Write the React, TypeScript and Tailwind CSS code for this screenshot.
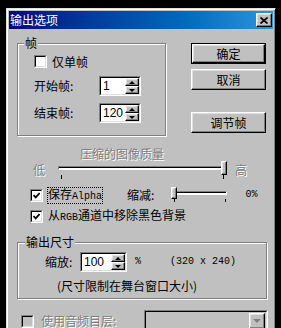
import React from "react";

const raised =
  "border border-t-white border-l-white border-r-black border-b-black shadow-[inset_-1px_-1px_0_#808080,inset_1px_1px_0_#dfdfdf]";
const sunkenOuter =
  "border border-t-[#808080] border-l-[#808080] border-r-white border-b-white";
const sunkenInner =
  "border border-t-black border-l-black border-r-[#dfdfdf] border-b-[#dfdfdf]";
const disabledText = "text-[#808080] [text-shadow:1px_1px_0_#fff]";
const latin = "font-['Liberation_Mono',monospace] text-[10px]";
const etched =
  "border border-[#808080] shadow-[inset_1px_1px_0_#fff,1px_1px_0_#fff]";

const Check = ({ checked, disabled }: { checked?: boolean; disabled?: boolean }) => (
  <div className={`w-[13px] h-[13px] shrink-0 ${sunkenOuter}`}>
    <div
      className={`w-full h-full flex items-center justify-center ${sunkenInner} ${
        disabled ? "bg-[#c0c0c0]" : "bg-white"
      }`}
    >
      {checked && (
        <svg width="7" height="7" viewBox="0 0 7 7">
          <path d="M0.5 3 L2.7 5.4 L6.6 1" stroke="black" strokeWidth="1.8" fill="none" />
        </svg>
      )}
    </div>
  </div>
);

const Arrow = ({ up }: { up?: boolean }) =>
  up ? (
    <div className="w-0 h-0 border-x-[3px] border-x-transparent border-b-[3px] border-b-black" />
  ) : (
    <div className="w-0 h-0 border-x-[3px] border-x-transparent border-t-[3px] border-t-black" />
  );

const Spin = ({ value, width }: { value: string; width: string }) => (
  <div className={`${width} h-[20px] shrink-0 ${sunkenOuter}`}>
    <div className={`h-full flex bg-white ${sunkenInner}`}>
      <div className="flex-1 flex items-center pl-[2px] font-['Liberation_Sans',sans-serif] text-[12px] leading-[12px]">
        {value}
      </div>
      <div className="w-[14px] flex flex-col">
        <div className={`flex-1 flex items-center justify-center bg-[#c0c0c0] ${raised}`}>
          <Arrow up />
        </div>
        <div className={`flex-1 flex items-center justify-center bg-[#c0c0c0] ${raised}`}>
          <Arrow />
        </div>
      </div>
    </div>
  </div>
);

const Button = ({ label, isDefault }: { label: string; isDefault?: boolean }) =>
  isDefault ? (
    <div className="w-[75px] h-[21px] border border-black">
      <div className={`h-full flex items-center justify-center bg-[#c0c0c0] ${raised}`}>{label}</div>
    </div>
  ) : (
    <div className={`w-[75px] h-[21px] flex items-center justify-center bg-[#c0c0c0] ${raised}`}>
      {label}
    </div>
  );

export default function App() {
  return (
    <div className="w-[281px] h-[328px] bg-black overflow-hidden font-['Noto_Sans_CJK_SC',sans-serif] text-[12px] leading-[12px] text-black">
      <div className="ml-[6px] mt-[8px] w-[270px] h-[324px] bg-[#c0c0c0] border border-t-[#dfdfdf] border-l-[#dfdfdf] border-r-black border-b-black p-[2px] shadow-[inset_1px_1px_0_#fff,inset_-1px_0_0_#808080]">
        {/* title bar */}
        <div className="h-[18px] flex items-center justify-between pl-[1px] pr-[1px] bg-linear-to-r from-[#000080] to-[#2a96dc]">
          <span className="text-white text-[12px]">输出选项</span>
          <div className={`w-[16px] h-[14px] flex items-center justify-center bg-[#c0c0c0] ${raised}`}>
            <svg width="8" height="7" viewBox="0 0 8 7">
              <path d="M0.5 0.5 L7.5 6.5 M7.5 0.5 L0.5 6.5" stroke="black" strokeWidth="1.7" />
            </svg>
          </div>
        </div>

        {/* top row */}
        <div className="flex mt-[14px] ml-[8px]">
          <div className={`relative w-[149px] h-[93px] ${etched}`}>
            <span className="absolute -top-[7px] left-[6px] px-[1px] bg-[#c0c0c0]">帧</span>
            <div className="pt-[11px] pl-[16px] flex flex-col">
              <div className="flex items-center h-[13px] gap-[5px]">
                <Check />
                <span>仅单帧</span>
              </div>
              <div className="flex items-center mt-[8px]">
                <span className="w-[65px]">开始帧:</span>
                <Spin value="1" width="w-[42px]" />
              </div>
              <div className="flex items-center mt-[7px]">
                <span className="w-[65px]">结束帧:</span>
                <Spin value="120" width="w-[42px]" />
              </div>
            </div>
          </div>
          <div className="ml-[25px] flex flex-col">
            <Button label="确定" isDefault />
            <div className="mt-[5px]">
              <Button label="取消" />
            </div>
            <div className="mt-[22px]">
              <Button label="调节帧" />
            </div>
          </div>
        </div>

        {/* compression */}
        <div className={`mt-[12px] ml-[71px] ${disabledText}`}>压缩的图像质量</div>
        <div className="flex items-start h-[20px] mt-[1px]">
          <span className={`ml-[24px] mt-[3px] ${disabledText}`}>低</span>
          <div className="relative ml-[11px] w-[172px] h-[20px]">
            <div className="absolute left-[2px] right-[2px] top-[5px] h-[4px] border border-t-[#808080] border-l-[#808080] border-r-white border-b-white bg-white shadow-[inset_0_1px_0_#000]" />
            <div className={`absolute left-[165px] top-0 w-[6px] h-[14px] bg-[#c0c0c0] ${raised}`} />
            <div className="absolute left-[5px] top-[14px] w-[1px] h-[4px] bg-black" />
            <div className="absolute left-[167px] top-[14px] w-[1px] h-[4px] bg-black" />
          </div>
          <span className={`ml-[7px] mt-[3px] ${disabledText}`}>高</span>
        </div>

        {/* checkbox rows */}
        <div className="flex items-center h-[14px] mt-[7px] ml-[21px]">
          <Check checked />
          <span className="ml-[4px] border border-dotted border-black px-0 leading-[12px]">
            保存<span className={latin}>Alpha</span>
          </span>
          <span className="ml-[24px]">缩减:</span>
          <div className="relative ml-[17px] w-[60px] h-[16px]">
            <div className="absolute left-[2px] right-[4px] top-[4px] h-[4px] border border-t-[#808080] border-l-[#808080] border-r-white border-b-white bg-white shadow-[inset_0_1px_0_#000]" />
            <div className={`absolute left-[0px] top-0 w-[6px] h-[12px] bg-[#c0c0c0] ${raised}`} />
            <div className="absolute left-[3px] top-[12px] w-[1px] h-[3px] bg-black" />
            <div className="absolute left-[54px] top-[12px] w-[1px] h-[3px] bg-black" />
          </div>
          <span className={`ml-[14px] ${latin}`}>0%</span>
        </div>
        <div className="flex items-center h-[13px] mt-[8px] ml-[21px]">
          <Check checked />
          <span className="ml-[5px]">
            从<span className={latin}>RGB</span>通道中移除黑色背景
          </span>
        </div>

        {/* output size */}
        <div className={`relative mt-[19px] ml-[8px] w-[250px] h-[57px] ${etched}`}>
          <span className="absolute -top-[7px] left-[7px] px-[1px] bg-[#c0c0c0]">输出尺寸</span>
          <div className="pt-[9px] flex flex-col">
            <div className="flex items-center h-[20px]">
              <span className="ml-[27px] w-[35px]">缩放:</span>
              <Spin value="100" width="w-[47px]" />
              <span className={`ml-[8px] ${latin}`}>%</span>
              <span className={`ml-[29px] ${latin}`}>(320 x 240)</span>
            </div>
            <div className="mt-[8px] ml-[39px]">(尺寸限制在舞台窗口大小)</div>
          </div>
        </div>

        {/* audio */}
        <div className="flex items-center h-[22px] mt-[11px] ml-[12px]">
          <Check disabled />
          <span className={`ml-[7px] w-[78px] ${disabledText}`}>使用音频目层:</span>
          <div className={`ml-[25px] w-[124px] h-[22px] ${sunkenOuter}`}>
            <div className={`h-full flex justify-end items-start p-[1px] bg-[#c0c0c0] ${sunkenInner}`}>
              <div className={`w-[16px] h-[16px] flex items-center justify-center bg-[#c0c0c0] ${raised}`}>
                <div className="w-0 h-0 border-x-[4px] border-x-transparent border-t-[4px] border-t-[#808080]" />
              </div>
            </div>
          </div>
        </div>
      </div>
    </div>
  );
}
